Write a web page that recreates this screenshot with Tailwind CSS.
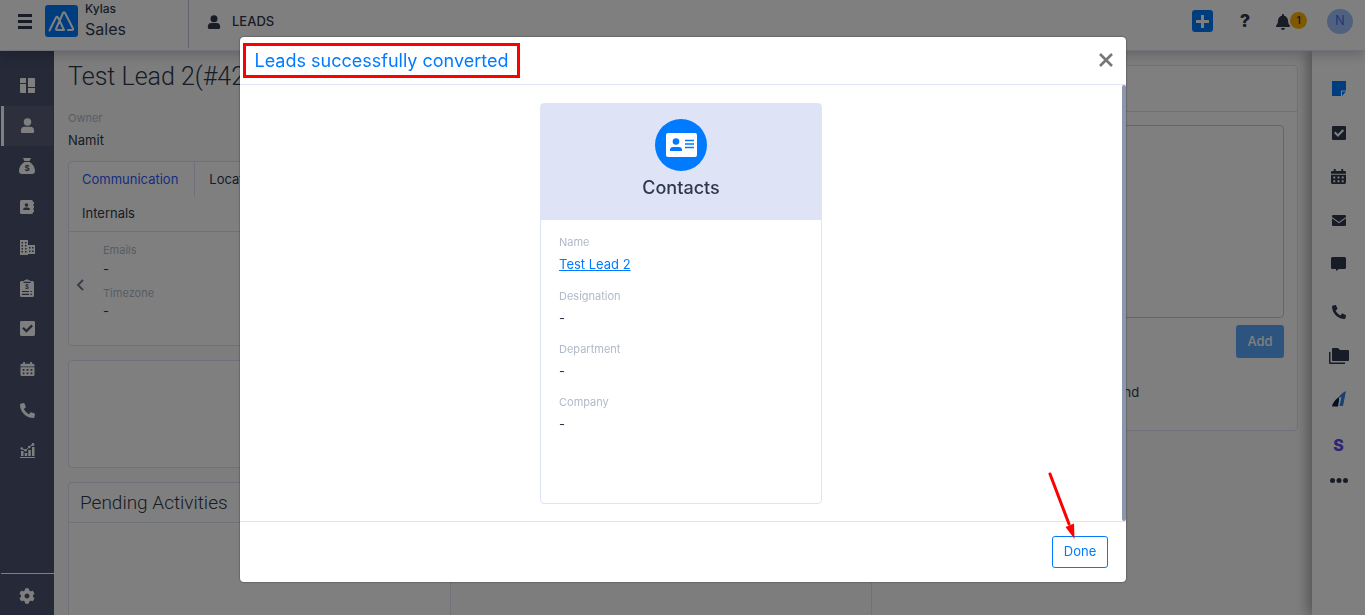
<!DOCTYPE html>
<html lang="en">

<head>
    <meta charset="UTF-8">
    <meta name="viewport" content="width=device-width, initial-scale=1.0">
    <title>Kylas Sales - Leads</title>
    <script src="https://cdn.jsdelivr.net/npm/@tailwindcss/browser@4"></script>
</head>

<body class="font-[Inter,sans-serif] text-[13px] text-[#2e384d] bg-[#fbfbfc]">
    <!-- shared icons -->
    <svg class="hidden">
        <symbol id="user" viewBox="0 0 16 16">
            <circle cx="8" cy="4.2" r="4" />
            <path d="M4.8 9.2h6.4c2.300 0 3.800 1.700 3.800 3.800v1.300c0 1-.7 1.700-1.700 1.700H2.700C1.700 16 1 15.300 1 14.300V13c0-2.100 1.500-3.800 3.800-3.800z" />
        </symbol>
        <symbol id="check" viewBox="0 0 16 16">
            <path fill-rule="evenodd" d="M1.500 0h13A1.500 1.500 0 0 1 16 1.500v13a1.500 1.500 0 0 1-1.500 1.500h-13A1.500 1.500 0 0 1 0 14.500v-13A1.500 1.500 0 0 1 1.500 0zM6.800 12.500l7-7-1.700-1.700-5.300 5.300-2.800-2.800L2.300 8z" />
        </symbol>
        <symbol id="calendar" viewBox="0 0 16 16">
            <path fill-rule="evenodd" d="M3 0h2v2h6V0h2v2h1.500A1.500 1.500 0 0 1 16 3.500V5H0V3.500A1.500 1.500 0 0 1 1.500 2H3zM0 6h16v8.500a1.500 1.500 0 0 1-1.500 1.500h-13A1.500 1.500 0 0 1 0 14.500zM2.500 8v2h2V8zM7 8v2h2V8zM11.500 8v2h2V8zM2.500 12v2h2v-2zM7 12v2h2v-2zM11.500 12v2h2v-2z" />
        </symbol>
        <symbol id="phone" viewBox="0 0 512 512">
            <path transform="translate(512 0) scale(-1 1)" d="M493.400 24.600l-104-24c-11.300-2.600-22.900 3.300-27.500 13.900l-48 112c-4.200 9.800-1.400 21.300 6.900 28l60.600 49.600c-36 76.700-98.900 140.500-177.200 177.200l-49.600-60.600c-6.800-8.300-18.200-11.100-28-6.900l-112 48C3.900 366.500-2 378.100.6 389.400l24 104C27.100 504.200 36.700 512 48 512c256.100 0 464-207.500 464-464 0-11.200-7.700-20.900-18.600-23.400z" />
        </symbol>
    </svg>

    <div class="h-screen flex flex-col overflow-hidden">
        <header class="relative z-10 h-[51px] shrink-0 flex items-center bg-white border-b border-[#dfe3f6] shadow-[0_4px_12px_rgba(0,0,0,0.2)]">
            <div class="w-[189px] h-12 self-start flex items-start border-r border-[#c5cbe0]">
                <button class="ml-[18px] mt-[14px]" aria-label="Menu">
                    <svg class="w-[14px] h-[15px]" viewBox="0 0 14 15" fill="#2e384d"><path d="M0 0h14v3H0zM0 6h14v3H0zM0 12h14v3H0z" /></svg>
                </button>
                <svg class="ml-[13px] mt-[5px] w-[33px] h-8" viewBox="0 0 33 32" fill="none" stroke="#fff" stroke-width="2" stroke-linecap="round" stroke-linejoin="round">
                    <rect width="33" height="32" rx="3" fill="#007bff" stroke="none" />
                    <path d="M4.500 25.500L11 12.500q1-1.500 2 0L19 25h-7q-1.500 0-.8-1.500L18 8q1-1.500 2 0l8 15.500q.5 1.500-1 1.500h-4" />
                </svg>
                <div class="ml-[7px] pt-px">
                    <p class="text-xs leading-4 font-medium">Kylas</p>
                    <p class="text-base leading-6">Sales</p>
                </div>
            </div>
            <h1 class="ml-[18px] flex items-center gap-[11px] font-medium -mt-1.5">
                <svg class="w-[14px] h-[14px]" fill="#2e384d"><use href="#user" /></svg>
                LEADS
            </h1>
            <div class="ml-auto mr-3 -mt-2 flex items-center">
                <button class="w-[21px] h-[22px] rounded-[3px] bg-[#007bff] flex items-center justify-center" aria-label="Create">
                    <svg class="w-[13px] h-[13px]" viewBox="0 0 13 13" fill="#fff"><path d="M5 0h3v5h5v3H8v5H5V8H0V5h5z" /></svg>
                </button>
                <button class="ml-[26px] w-3 text-lg leading-6 font-extrabold">?</button>
                <button class="ml-[25px] flex" aria-label="Notifications">
                    <svg class="w-[14px] h-4 mt-[2px]" viewBox="0 0 448 512" fill="#2e384d"><path d="M224 512c35.320 0 63.970-28.650 63.970-64H160.030c0 35.350 28.650 64 63.970 64zm215.390-149.710c-19.320-20.760-55.470-51.990-55.470-154.290 0-77.700-54.480-139.900-127.940-155.160V32c0-17.670-14.320-32-31.980-32s-31.980 14.330-31.980 32v20.840C118.560 68.100 64.080 130.300 64.080 208c0 102.300-36.150 133.530-55.470 154.290-6 6.450-8.660 14.160-8.610 21.710.11 16.400 12.980 32 32.100 32h383.800c19.120 0 32-15.600 32.100-32 .05-7.550-2.610-15.270-8.610-21.710z" /></svg>
                    <span class="w-[17px] h-[17px] rounded-full bg-[#ffb300] text-[10px] leading-[17px] font-semibold text-center">1</span>
                </button>
                <button class="ml-5 w-[26px] h-[25px] rounded-full bg-[#a0c3ff] text-[#3d74f0] text-[13px]">N</button>
            </div>
        </header>

        <div class="flex-1 min-h-0 flex">
            <nav class="w-[54px] shrink-0 flex flex-col bg-[#4a5270]">
                <div class="mt-[14px] h-[406px] flex flex-col px-px">
                    <a href="#" class="flex-1 flex items-center justify-center" aria-label="Dashboard">
                        <svg class="w-[15px] h-[15px]" viewBox="0 0 15 15" fill="#fff"><path d="M1 0h5v5H0V1q0-1 1-1zM8 0h6q1 0 1 1v8H8zM0 6h6v9H1q-1 0-1-1zM8 10h7v4q0 1-1 1H8z" /></svg>
                    </a>
                    <a href="#" class="flex-1 flex items-center justify-center bg-[#5b6178] border-l-[3px] border-white pr-[3px]" aria-label="Leads">
                        <svg class="w-[15px] h-[15px]" fill="#fff"><use href="#user" /></svg>
                    </a>
                    <a href="#" class="flex-1 flex items-center justify-center" aria-label="Deals">
                        <svg class="w-4 h-4" viewBox="0 0 16 16" fill="#fff">
                            <path d="M4 0h8l-1.500 3h-5zM5.300 4h5.400c3 2.200 5.300 5 5.300 9 0 2-1 3-3 3H3c-2 0-3-1-3-3 0-4 2.300-6.800 5.300-9z" />
                            <text x="8" y="13" font-size="8" font-weight="700" text-anchor="middle" fill="#4a5270">$</text>
                        </svg>
                    </a>
                    <a href="#" class="flex-1 flex items-center justify-center" aria-label="Contacts">
                        <svg class="w-[14px] h-[14px]" viewBox="0 0 14 14" fill="#fff">
                            <path d="M1.500 0h10Q13 0 13 1.500V2h1v2.500h-1v1h1v3h-1v1h1V12h-1v.5q0 1.500-1.500 1.500h-10Q0 14 0 12.500v-11Q0 0 1.500 0z" />
                            <g fill="#4a5270"><circle cx="6.500" cy="5" r="1.800" /><path d="M3 10q0-2.500 2-2.500h3q2 0 2 2.500z" /></g>
                        </svg>
                    </a>
                    <a href="#" class="flex-1 flex items-center justify-center" aria-label="Companies">
                        <svg class="w-[15px] h-[15px]" viewBox="0 0 15 15" fill="#fff"><path fill-rule="evenodd" d="M0 0h8v5h7v9H8v1H0zM1.500 2v1.500H3V2zM5 2v1.500h1.500V2zM1.500 5v1.500H3V5zM5 5v1.500h1.500V5zM1.500 8v1.500H3V8zM5 8v1.500h1.500V8zM1.500 11v1.500H3V11zM5 11v1.500h1.500V11zM9 7v1.500h1.500V7zM12 7v1.500h1.500V7zM9 10.500V12h1.500v-1.500zM12 10.500V12h1.500v-1.500z" /></svg>
                    </a>
                    <a href="#" class="flex-1 flex items-center justify-center" aria-label="Quotations">
                        <svg class="w-[14px] h-[18px]" viewBox="0 0 14 18" fill="#fff">
                            <path d="M1.500 2H4V1.200h1.500Q7-.8 8.500 1.200H10V2h2.500Q14 2 14 3.500v13q0 1.500-1.500 1.500h-11Q0 18 0 16.500v-13Q0 2 1.500 2z" />
                            <path d="M3.500 3.300h7M2 12.500h7M10.500 12.500H12M2 15.300h7M10.500 15.300H12" stroke="#4a5270" stroke-width="1.200" />
                            <text x="7" y="10" font-size="6" font-weight="700" text-anchor="middle" fill="#4a5270">$</text>
                        </svg>
                    </a>
                    <a href="#" class="flex-1 flex items-center justify-center" aria-label="Tasks">
                        <svg class="w-[15px] h-[15px]" fill="#fff"><use href="#check" /></svg>
                    </a>
                    <a href="#" class="flex-1 flex items-center justify-center" aria-label="Meetings">
                        <svg class="w-[15px] h-[14px]" fill="#fff"><use href="#calendar" /></svg>
                    </a>
                    <a href="#" class="flex-1 flex items-center justify-center" aria-label="Calls">
                        <svg class="w-[15px] h-[15px]" fill="#fff"><use href="#phone" /></svg>
                    </a>
                    <a href="#" class="flex-1 flex items-center justify-center" aria-label="Reports">
                        <svg class="w-[15px] h-[15px]" viewBox="0 0 15 15" fill="#fff">
                            <path d="M0 14h15v1H0zM1 8h2.500v5H1zM4.700 10h2.500v3H4.700zM8.300 7h2.500v6H8.300zM12 4h2.500v9H12z" />
                            <path d="M1.500 5.500l4 1.800 4-3.500 3.500-2.300" fill="none" stroke="#fff" />
                            <circle cx="1.700" cy="5.500" r="1.200" /><circle cx="5.500" cy="7.300" r="1.200" /><circle cx="9.300" cy="4" r="1.200" /><circle cx="13" cy="1.500" r="1.400" />
                        </svg>
                    </a>
                </div>
                <a href="#" class="mt-auto h-[42px] flex items-center justify-center pt-0.5 pr-0.5 border-t border-white ml-px" aria-label="Settings">
                    <svg class="w-4 h-4" viewBox="0 0 512 512" fill="#fff"><path d="M487.400 315.700l-42.600-24.600c4.300-23.200 4.300-47 0-70.200l42.600-24.600c4.900-2.800 7.100-8.600 5.500-14-11.100-35.600-30-67.800-54.700-94.600-3.800-4.100-10-5.100-14.800-2.300L380.800 110c-17.900-15.400-38.500-27.300-60.800-35.100V25.800c0-5.600-3.900-10.500-9.400-11.700-36.700-8.200-74.300-7.800-109.200 0-5.500 1.200-9.400 6.100-9.400 11.700V75c-22.200 7.900-42.800 19.800-60.800 35.100L88.700 85.500c-4.900-2.800-11-1.900-14.800 2.300-24.700 26.700-43.600 58.900-54.700 94.600-1.700 5.400.6 11.200 5.500 14L67.300 221c-4.300 23.200-4.300 47 0 70.200l-42.600 24.600c-4.900 2.800-7.100 8.600-5.500 14 11.100 35.600 30 67.800 54.700 94.600 3.800 4.100 10 5.100 14.800 2.300l42.600-24.600c17.900 15.400 38.500 27.300 60.800 35.100v49.200c0 5.600 3.900 10.500 9.400 11.700 36.700 8.200 74.300 7.800 109.200 0 5.500-1.200 9.400-6.100 9.400-11.700v-49.200c22.200-7.900 42.800-19.800 60.800-35.100l42.600 24.600c4.900 2.800 11 1.900 14.800-2.300 24.700-26.700 43.600-58.900 54.700-94.600 1.500-5.500-.7-11.300-5.600-14.100zM256 336c-44.100 0-80-35.900-80-80s35.900-80 80-80 80 35.900 80 80-35.900 80-80 80z" /></svg>
                </a>
            </nav>

            <main class="flex-1 min-w-0 flex pl-[14px] pr-[14px]">
                <div class="w-[383px] shrink-0 flex flex-col">
                    <h2 class="mt-[10px] font-[Roboto,sans-serif] text-[25px] leading-8 font-light whitespace-nowrap">Test Lead 2(#42</h2>
                    <p class="mt-[17px] text-[11px] leading-4 text-[#b0bac9]">Owner</p>
                    <p class="mt-1 leading-5">Namit</p>
                    <section class="mt-[11px] h-[185px] shrink-0 rounded border border-[#dfe3f6] bg-white">
                        <div class="flex flex-wrap border-b border-[#dfe3f6] leading-[35px]">
                            <button class="pl-[13px] pr-4 text-[#2e5bff] border-r border-[#dfe3f6]">Communication</button>
                            <button class="px-[14px] border-r border-[#dfe3f6]">Location</button>
                            <button class="px-[14px]">Requirement</button>
                            <button class="px-[13px] -mt-px">Internals</button>
                        </div>
                        <div class="flex items-center pl-[7px] pt-[10px]">
                            <button class="mt-2" aria-label="Previous">
                                <svg class="w-2 h-3" viewBox="0 0 8 12" fill="none" stroke="#69809a" stroke-width="2"><path d="M7 1L2 6l5 5" /></svg>
                            </button>
                            <dl class="ml-[19px] leading-4">
                                <dt class="text-[11px] text-[#b0bac9]">Emails</dt>
                                <dd class="pt-[3px]">-</dd>
                                <dt class="mt-2 text-[11px] text-[#b0bac9]">Timezone</dt>
                                <dd class="pt-[2px]">-</dd>
                            </dl>
                        </div>
                    </section>
                    <section class="mt-[14px] h-[108px] shrink-0 rounded border border-[#dfe3f6] bg-white"></section>
                    <section class="mt-[14px] flex-1 rounded-t border border-b-0 border-[#dfe3f6] bg-white">
                        <h3 class="h-10 px-[11px] font-[Roboto,sans-serif] text-[19px] leading-10 font-light border-b border-[#dfe3f6]">Pending Activities</h3>
                    </section>
                </div>
                <div class="flex-1 border-r border-[#dfe3f6]"></div>
                <div class="w-[426px] shrink-0 pl-[14px] pt-[14px]">
                    <section class="h-[366px] rounded border border-[#dfe3f6] bg-white">
                        <div class="h-[46px] border-b border-[#dfe3f6]"></div>
                        <div class="px-[13px] pt-[13px]">
                            <textarea class="block w-full h-[193px] resize-none rounded border border-[#c5cbe8]" aria-label="Note"></textarea>
                            <button class="block ml-auto mt-[7px] w-12 h-[33px] rounded-[3px] bg-[#007bff] opacity-65 text-white font-medium">Add</button>
                            <p class="mt-6 leading-5 text-center">No notes found</p>
                        </div>
                    </section>
                </div>
            </main>

            <aside class="w-[53px] shrink-0 flex flex-col pt-4 bg-white shadow-[-4px_0_12px_rgba(0,0,0,0.35)]">
                <div class="h-[400px] flex flex-col">
                    <button class="flex-1 flex items-center justify-center" aria-label="Notes">
                        <svg class="w-[14px] h-[15px]" viewBox="0 0 14 15" fill="#007bff"><path d="M0 0h14v9.500H9V15H0zM10 10.500h4L10 15z" /></svg>
                    </button>
                    <button class="flex-1 flex items-center justify-center" aria-label="Tasks">
                        <svg class="w-[14px] h-[14px]" fill="#2e384d"><use href="#check" /></svg>
                    </button>
                    <button class="flex-1 flex items-center justify-center" aria-label="Meetings">
                        <svg class="w-[15px] h-[15px]" fill="#2e384d"><use href="#calendar" /></svg>
                    </button>
                    <button class="flex-1 flex items-center justify-center" aria-label="Email">
                        <svg class="w-[14px] h-[11px]" viewBox="0 0 14 11" fill="#2e384d"><path d="M1.300 0h11.400Q14 0 14 1.300V2L7 7 0 2v-.7Q0 0 1.300 0zM0 3.300l7 5 7-5v6.400q0 1.300-1.300 1.300H1.300Q0 11 0 9.700z" /></svg>
                    </button>
                    <button class="flex-1 flex items-center justify-center pb-1" aria-label="Messages">
                        <svg class="w-[15px] h-[14px]" viewBox="0 0 15 14" fill="#2e384d"><path d="M1.500 0h12Q15 0 15 1.500v9q0 1.500-1.500 1.500H8l-3 2v-2H1.500Q0 12 0 10.500v-9Q0 0 1.500 0z" /></svg>
                    </button>
                    <button class="flex-1 flex items-center justify-center" aria-label="Calls">
                        <svg class="w-[14px] h-[14px]" fill="#2e384d"><use href="#phone" /></svg>
                    </button>
                    <button class="flex-1 flex items-center justify-center" aria-label="Documents">
                        <svg class="w-5 h-4" viewBox="0 0 20 16" fill="#2e384d"><path d="M4 0h5l2 2h8q1 0 1 1v9q0 1-1 1H4q-1 0-1-1V1q0-1 1-1zM0 4h1.500v10.500H16V16H1.200Q0 16 0 15z" /></svg>
                    </button>
                    <button class="flex-1 flex items-center justify-center" aria-label="Activity">
                        <svg class="w-[14px] h-4" viewBox="0 0 14 16"><path d="M7 6v3.500L6 15.500H0Q1 10 7 6z" fill="#0a1f44" /><path d="M14 0L11 15H7.500L9.500 6l-3 1Q8 3 14 0z" fill="#2f86e5" /></svg>
                    </button>
                    <button class="flex-1 pt-0.5 text-base font-extrabold text-[#5a4be8]">S</button>
                </div>
                <button class="h-[26px] flex items-center justify-center" aria-label="More">
                    <svg class="w-[18px] h-[5px]" viewBox="0 0 18 5" fill="#2e384d"><circle cx="2.500" cy="2.500" r="2.500" /><circle cx="9" cy="2.500" r="2.500" /><circle cx="15.500" cy="2.500" r="2.500" /></svg>
                </button>
            </aside>
        </div>
    </div>

    <div class="fixed inset-0 z-20 bg-black/50 pt-[37px] pl-60 pr-[239px]">
        <div role="dialog" aria-labelledby="dialogTitle" class="flex flex-col rounded bg-white shadow-[0_0_2px_rgba(0,0,0,0.6)]">
            <div class="h-12 flex items-center justify-between pl-[3px] pr-[13px] border-b border-[#dfe3f6]">
                <h2 id="dialogTitle" class="w-[277px] border-[3px] border-[#ff0000] text-center text-lg leading-[29px] text-[#007bff]">Leads successfully converted</h2>
                <button class="pb-0.5" aria-label="Close">
                    <svg class="w-[14px] h-[14px]" viewBox="0 0 14 14" stroke="#777" stroke-width="2.600"><path d="M1 1l12 12M13 1L1 13" /></svg>
                </button>
            </div>
            <div class="flex">
                <div class="flex-1 pt-[18px] pb-[17px]">
                    <div class="w-[282px] h-[401px] mx-auto rounded border border-[#dfe3f6]">
                        <div class="h-[116px] pt-[15px] bg-[#dfe3f6] flex flex-col items-center">
                            <div class="w-[52px] h-[52px] rounded-full bg-[#007bff] flex items-center justify-center">
                                <svg class="w-[31px] h-6" viewBox="0 0 31 24">
                                    <rect width="31" height="24" rx="2" fill="#fff" />
                                    <circle cx="10" cy="8.500" r="3.300" fill="#007bff" />
                                    <path d="M4 18v-1q0-3 3-3h6q3 0 3 3v1z" fill="#007bff" />
                                    <path d="M19 7.500h9M19 11h9M19 14.500h9" stroke="#007bff" stroke-width="1.300" />
                                </svg>
                            </div>
                            <h3 class="mt-[5px] text-lg leading-6 font-medium">Contacts</h3>
                        </div>
                        <dl class="px-[18px] pt-[14px]">
                            <dt class="text-[11px] leading-4 text-[#b0bac9]">Name</dt>
                            <dd class="mt-1 mb-[13px] leading-[21px]"><a href="#" class="text-[#007bff] underline">Test Lead 2</a></dd>
                            <dt class="text-[11px] leading-4 text-[#b0bac9]">Designation</dt>
                            <dd class="mt-1 mb-3 leading-[21px]">-</dd>
                            <dt class="text-[11px] leading-4 text-[#b0bac9]">Department</dt>
                            <dd class="mt-1 mb-3 leading-[21px]">-</dd>
                            <dt class="text-[11px] leading-4 text-[#b0bac9]">Company</dt>
                            <dd class="mt-1 leading-[21px]">-</dd>
                        </dl>
                    </div>
                </div>
                <div class="w-1 rounded-full bg-[#8b96ad]"></div>
            </div>
            <div class="relative h-[61px] flex items-center justify-end pr-[18px] border-t border-[#dfe3f6]">
                <button class="w-14 h-8 rounded-[3px] border border-[#007bff] text-[#007bff]">Done</button>
                <svg class="absolute right-[48px] bottom-[42px] w-[30px] h-[68px]" viewBox="0 0 30 68" fill="#ff0000"><path d="M2 2l19 50" stroke="#ff0000" stroke-width="3" stroke-linecap="round" /><path d="M17.500 55l8.500-3.500L26.500 67z" /></svg>
            </div>
        </div>
    </div>
</body>

</html>
